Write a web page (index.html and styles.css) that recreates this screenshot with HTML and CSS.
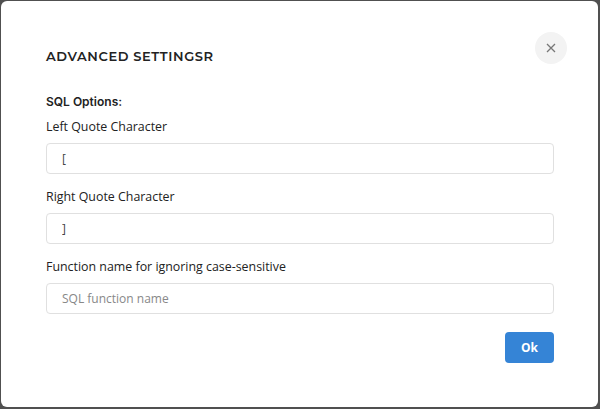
FILE: index.html
```html
<!DOCTYPE html>
<html>
<head>
<meta charset="utf-8">
<link rel="stylesheet" href="styles.css">
</head>
<body>
<div class="modal">
  <div class="modal-header">
    <h2 class="modal-title">ADVANCED SETTINGSR</h2>
    <button class="close-btn" aria-label="Close">
      <svg width="10" height="10" viewBox="0 0 10 10"><path d="M1 1L9 9M9 1L1 9" stroke="#777" stroke-width="1.3" fill="none"/></svg>
    </button>
  </div>
  <div class="modal-body">
    <div class="section-title">SQL Options:</div>
    <label class="field-label">Left Quote Character</label>
    <input class="field-input" type="text" value="[">
    <label class="field-label">Right Quote Character</label>
    <input class="field-input" type="text" value="]">
    <label class="field-label">Function name for ignoring case-sensitive</label>
    <input class="field-input" type="text" placeholder="SQL function name">
  </div>
  <div class="modal-footer">
    <button class="ok-btn">Ok</button>
  </div>
</div>
</body>
</html>
```
FILE: styles.css
```css
html, body {
  margin: 0;
  padding: 0;
  background: #505050;
  height: 409px;
  overflow: hidden;
}
body {
  padding: 1px 2px 2px 1px;
  box-sizing: border-box;
}
.modal {
  background: #fff;
  border-radius: 6px;
  height: 406px;
  box-sizing: border-box;
  padding: 0 44px 0 45px;
  font-family: "Open Sans", "Liberation Sans", sans-serif;
  color: #222;
}
.modal-header {
  display: flex;
  justify-content: space-between;
  align-items: flex-start;
  padding-top: 46px;
}
.modal-title {
  margin: 0;
  font-family: "Montserrat", "Inter", "Lato", sans-serif;
  font-size: 13px;
  font-weight: 600;
  letter-spacing: 0.6px;
  color: #222;
  line-height: 18px;
}
.close-btn {
  width: 32px;
  height: 32px;
  border-radius: 50%;
  border: none;
  background: #f3f3f3;
  margin-top: -15px;
  margin-right: -13px;
  display: flex;
  align-items: center;
  justify-content: center;
  padding: 0;
}
.modal-body {
  display: flex;
  flex-direction: column;
  padding-top: 29px;
}
.section-title {
  font-family: "Inter", "Lato", sans-serif;
  font-weight: 600;
  font-size: 12px;
  line-height: 16px;
  color: #222;
  margin-bottom: 9px;
}
.field-label {
  font-size: 12.4px;
  line-height: 16px;
  color: #222;
  margin-bottom: 8px;
}
.field-input {
  height: 31px;
  box-sizing: border-box;
  border: 1px solid #e0e0e0;
  border-radius: 4px;
  padding: 0 15px;
  font-family: "Open Sans", "Liberation Sans", sans-serif;
  font-size: 12px;
  color: #444;
  margin-bottom: 15px;
  outline: none;
}
.field-input::placeholder {
  color: #888;
}
.modal-footer {
  display: flex;
  justify-content: flex-end;
  padding-top: 3px;
}
.ok-btn {
  width: 49px;
  height: 31px;
  background: #3584d6;
  color: #fff;
  border: none;
  border-radius: 4px;
  font-family: "Open Sans", "Liberation Sans", sans-serif;
  font-weight: 700;
  font-size: 12px;
  padding: 0;
}
```
